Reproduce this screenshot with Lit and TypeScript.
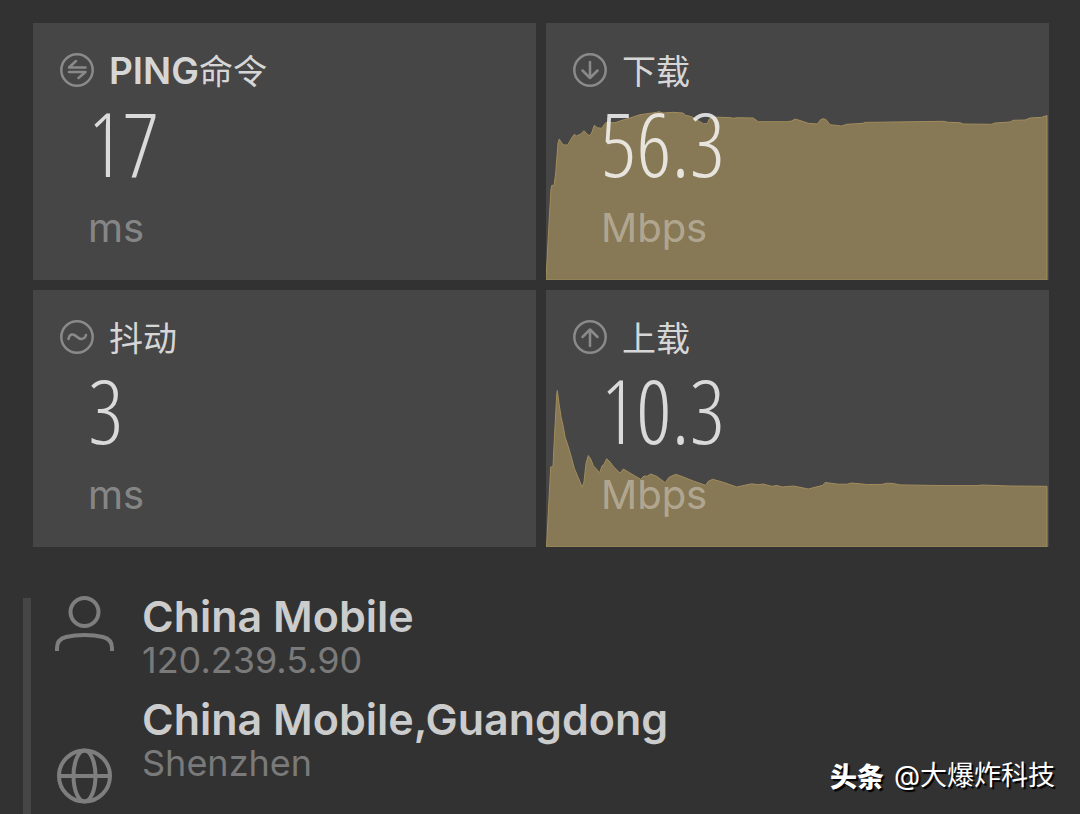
import { LitElement, html, css, svg, nothing } from "lit";
import { customElement, property } from "lit/decorators.js";

type Icon = "ping" | "down" | "up" | "jitter";

interface Metric {
  label: string;
  latin?: string;
  value: string;
  unit: string;
  icon: Icon;
  trend?: string;
}

const DOWNLOAD_TREND =
  "0,257 3,200 5,166 6,162 8,163 9.7,150 12,120 13.3,116 15.7,120 18,122 21.7,122 25.7,115 28.3,111.3 30.7,113 34.7,111 38,107.7 41.3,111.3 44,112.7 46,109 48.3,102.3 51.3,104.7 55.7,105.3 59.7,99.7 69,99.7 77,97 84,95 94,91.7 110,89.5 113,88.7 117,90 127,89.3 137,90 139.7,92.3 145.7,93.7 152.3,97.7 157.3,100.7 161.3,100.7 163,96.3 167.3,94 184,94.7 188,95.3 191,94.7 207.3,95 212.3,98.7 240.7,98.7 245.7,98 249,96 254,97.5 262.3,100.3 271.3,101 274.7,96.5 277,95.8 280,96.5 284,101.7 295.7,103 300.7,101.3 317,100.3 319,99.4 397.3,98.3 402.3,99.3 414,99.7 417.3,101 445.7,101.3 449,100 464,99 467.3,97.3 479,97 484,95 495.7,94.3 501,92.5 501,257";

const UPLOAD_TREND =
  "0.5,257 4.7,177 7,176.7 8,155 10.7,105 11.3,100.5 13,113.3 15,126.7 17.3,136.7 19,146.7 22.3,156.7 25.7,168.3 28.3,178.3 32.3,187.7 36.3,197.3 38,191.7 40,173.3 42.3,165.5 44.7,169 47.3,175.7 50.7,179.3 53.7,182.7 56,176 58,174.3 60.7,168.7 64,172 68,177.3 74,183 77.3,179 82.3,182 94.7,189.3 98,186 101,186.3 104.7,184 110.7,186.3 119.3,192.7 123,187.3 129.7,184.3 137.3,187 147.3,191 159.7,195.3 162.3,191.3 166.7,189.3 177.3,192.3 190.7,197 205.7,193.8 212.3,194.7 217,194 225.7,196.3 231,195.5 236,197 247.3,196 254,197.3 262.3,199 276.7,195.3 279,192.5 292.3,194.2 301,194.2 305.7,193 320.7,194.5 336,194.4 340.7,193.2 347,193.5 354,194.9 400.7,195.6 431,195.6 435.7,195 464,196 501,196.3 501,257";

const METRICS: Metric[] = [
  { latin: "PING", label: "命令", value: "17", unit: "ms", icon: "ping" },
  { label: "下载", value: "56.3", unit: "Mbps", icon: "down", trend: DOWNLOAD_TREND },
  { label: "抖动", value: "3", unit: "ms", icon: "jitter" },
  { label: "上载", value: "10.3", unit: "Mbps", icon: "up", trend: UPLOAD_TREND },
];

const GLYPHS = {
  ping: svg`<path d="M25.500 14.500H9L16 8M9 19H25.500L18.500 25" />`,
  down: svg`<path d="M17 9v16M9.500 17.500L17 25L24.500 17.500" />`,
  up: svg`<path d="M17 26V9.500M9.500 17L17 9.500L24.500 17" />`,
  jitter: svg`<path d="M8.500 19C9.500 14 13 13 16.500 16.500S24.500 20 26 15" />`,
};

@customElement("metric-card")
class MetricCard extends LitElement {
  @property({ attribute: false }) metric!: Metric;

  static styles = css`
    :host {
      display: block;
      position: relative;
      background: #464646;
    }
    .trend {
      position: absolute;
      inset: 0;
      width: 100%;
      height: 100%;
    }
    .area {
      fill: #877856;
      stroke: #a18c5c;
      stroke-width: 1;
      vector-effect: non-scaling-stroke;
    }
    .body {
      position: relative;
      padding: 27px 27px 28px;
    }
    .head {
      display: flex;
      align-items: center;
      gap: 15px;
      height: 40px;
      color: rgba(255, 255, 255, 0.8);
    }
    .icon {
      flex: none;
      width: 34px;
      height: 34px;
      fill: none;
      stroke: #8a8a8a;
      stroke-width: 2.5;
      stroke-linecap: round;
      stroke-linejoin: round;
    }
    .label {
      margin: 0;
      font-family: "Noto Sans CJK SC", sans-serif;
      font-size: 34px;
      font-weight: 400;
      line-height: 38px;
      white-space: nowrap;
    }
    .latin {
      font-family: Inter, sans-serif;
      font-size: 37px;
      font-weight: 600;
    }
    .value {
      margin: 3px 0 11px;
      padding-left: 28px;
      font-family: "Open Sans Condensed Light", "Roboto Condensed", Roboto, sans-serif;
      font-size: 88px;
      font-weight: 200;
      line-height: 100px;
      color: rgba(255, 255, 255, 0.8);
    }
    .unit {
      margin: 0;
      padding-left: 28px;
      font-size: 40px;
      line-height: 48px;
      color: rgba(255, 255, 255, 0.37);
    }
  `;

  render() {
    const m = this.metric;
    return html`
      ${m.trend
        ? html`<svg class="trend" viewBox="0 0 503 257" preserveAspectRatio="none" aria-hidden="true">
            <polygon class="area" points=${m.trend} />
          </svg>`
        : nothing}
      <div class="body">
        <div class="head">
          <svg class="icon" viewBox="0 0 34 34" aria-hidden="true">
            <circle cx="17" cy="17" r="15.7" />
            ${GLYPHS[m.icon]}
          </svg>
          <h2 class="label">${m.latin ? html`<span class="latin">${m.latin}</span>` : nothing}${m.label}</h2>
        </div>
        <p class="value">${m.value}</p>
        <p class="unit">${m.unit}</p>
      </div>
    `;
  }
}

@customElement("app-root")
class AppRoot extends LitElement {
  static styles = css`
    :host {
      display: flex;
      flex-direction: column;
      box-sizing: border-box;
      min-height: 100vh;
      padding-top: 23px;
      background: #323232;
      font-family: Inter, "Noto Sans CJK SC", sans-serif;
      position: relative;
    }
    .metrics {
      display: grid;
      grid-template-columns: 1fr 1fr;
      gap: 10px;
      padding: 0 31px 0 33px;
    }
    .details {
      flex: 1;
      display: flex;
      gap: 24px;
      margin-top: 48px;
      padding-left: 23px;
    }
    .rail {
      flex: none;
      width: 8px;
      margin-top: 3px;
      background: #464646;
    }
    .entries {
      display: flex;
      flex-direction: column;
      gap: 17px;
    }
    .entry {
      display: flex;
      gap: 28px;
      height: 86px;
    }
    .icon {
      flex: none;
      width: 59px;
      height: 58px;
      fill: none;
      stroke: #7e7e7e;
      stroke-width: 4;
    }
    .low {
      margin-top: 49px;
    }
    .name {
      margin: 0 0 2px;
      font-size: 43px;
      font-weight: 600;
      line-height: 42px;
      color: #cccccc;
      white-space: nowrap;
    }
    .note {
      margin: 0;
      font-size: 36px;
      line-height: 42px;
      color: #7a7a7a;
    }
    .credit {
      position: absolute;
      right: 25px;
      bottom: 18px;
      display: flex;
      gap: 10px;
      font-family: "Noto Sans CJK SC", sans-serif;
      font-size: 27px;
      line-height: 40px;
      color: #ffffff;
      text-shadow: 2px 2px 1px #000000;
    }
    .brand {
      font-weight: 900;
    }
    .handle {
      font-family: Inter, "Noto Sans CJK SC", sans-serif;
    }
  `;

  render() {
    return html`
      <section class="metrics">
        ${METRICS.map((m) => html`<metric-card .metric=${m}></metric-card>`)}
      </section>
      <section class="details">
        <div class="rail"></div>
        <div class="entries">
          <div class="entry">
            <svg class="icon" viewBox="0 0 59 58" aria-hidden="true">
              <circle cx="29.500" cy="17" r="14" />
              <path d="M2 56V53C2 47 5 43.500 11 42C17 40.500 23 40 29.500 40S42 40.500 48 42C54 43.500 57 47 57 53V56" />
            </svg>
            <div>
              <h3 class="name">China Mobile</h3>
              <p class="note">120.239.5.90</p>
            </div>
          </div>
          <div class="entry">
            <svg class="icon low" viewBox="0 0 59 58" aria-hidden="true">
              <circle cx="29.500" cy="29" r="25.500" />
              <ellipse cx="29.500" cy="29" rx="11" ry="25.500" />
              <path d="M4 29H55" />
            </svg>
            <div>
              <h3 class="name">China Mobile,Guangdong</h3>
              <p class="note">Shenzhen</p>
            </div>
          </div>
        </div>
      </section>
      <div class="credit"><span class="brand">头条</span><span class="handle">@大爆炸科技</span></div>
    `;
  }
}
